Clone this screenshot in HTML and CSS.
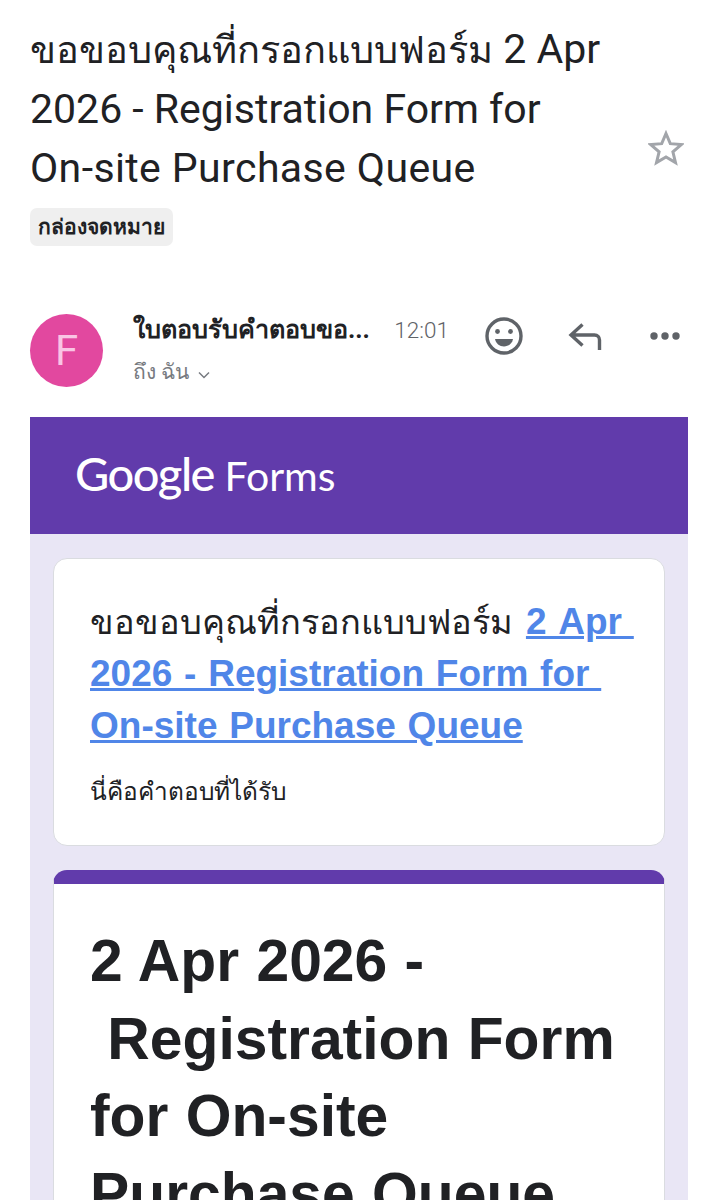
FILE: index.html
```html
<!DOCTYPE html>
<html>
<head>
  <meta charset="UTF-8">
  <title>Email</title>
  <link rel="stylesheet" href="styles.css">
</head>
<body>
  <div class="subject-row">
    <div class="subject-text">
      <h1 class="subject"><span class="subject-th">ขอขอบคุณที่กรอกแบบฟอร์ม</span> 2 Apr<br>2026 - Registration Form for<br><span class="subject-end">On-site Purchase Queue</span></h1>
      <span class="label">กล่องจดหมาย</span>
    </div>
    <svg class="star" viewBox="0 0 36 36" width="36" height="36">
      <path d="M18 3.5l4.3 10.2 11 .9-8.4 7.200 2.600 10.800L18 26.900 8.500 32.600l2.600-10.800-8.400-7.200 11-.9z" fill="none" stroke="#a2a5aa" stroke-width="3"/>
    </svg>
  </div>

  <div class="sender-row">
    <div class="avatar">F</div>
    <div class="sender-info">
      <div class="sender-top">
        <span class="sender-name">ใบตอบรับคำตอบขอ...</span>
        <span class="time">12:01</span>
      </div>
      <div class="to">ถึง ฉัน
        <svg class="chevron" viewBox="0 0 12 8" width="12" height="8">
          <path d="M1 1.500l5 5 5-5" fill="none" stroke="#777a80" stroke-width="1.500"/>
        </svg>
      </div>
    </div>
    <div class="actions">
      <svg viewBox="0 0 40 40" width="40" height="40">
        <circle cx="20" cy="20" r="17" fill="none" stroke="#5f6368" stroke-width="3.400"/>
        <circle cx="13.500" cy="15.500" r="2.400" fill="#5f6368"/>
        <circle cx="26.500" cy="15.500" r="2.400" fill="#5f6368"/>
        <path d="M11 23h18c-.8 4.500-4.500 7.500-9 7.500s-8.200-3-9-7.500z" fill="#5f6368"/>
      </svg>
      <svg viewBox="0 0 40 40" width="40" height="40">
        <path d="M15.500 8.500L4 19l11.500 10.500M4 19h23.500c3 0 5 2 5 5v10" fill="none" stroke="#5f6368" stroke-width="3.400"/>
      </svg>
      <svg viewBox="0 0 32 12" width="32" height="12">
        <circle cx="5" cy="6" r="3.700" fill="#5f6368"/>
        <circle cx="16" cy="6" r="3.700" fill="#5f6368"/>
        <circle cx="27" cy="6" r="3.700" fill="#5f6368"/>
      </svg>
    </div>
  </div>

  <div class="mail">
    <div class="mail-header">
      <span class="logo"><span class="logo-google">Google</span> Forms</span>
    </div>
    <div class="mail-body">
      <div class="card intro">
        <p class="thanks"><span class="thanks-th">ขอขอบคุณที่กรอกแบบฟอร์ม</span> <a href="#">2 Apr&nbsp;<br>2026 - Registration Form for&nbsp;<br>On-site Purchase Queue</a></p>
        <p class="note">นี่คือคำตอบที่ได้รับ</p>
      </div>
      <div class="card form-card">
        <h2 class="form-title">2 Apr 2026 -<br>&nbsp;Registration Form<br>for On-site<br>Purchase Queue</h2>
      </div>
    </div>
  </div>
</body>
</html>
```

FILE: styles.css
```css
html, body {
  height: 1200px;
  overflow: hidden;
}

body {
  margin: 0;
  background: #fff;
  color: #202124;
  font-family: Roboto, "Noto Sans", sans-serif;
}

.subject-row {
  display: flex;
  align-items: flex-start;
  padding: 20px 33px 0 30px;
}

.subject-text {
  flex: 1;
}

.subject {
  margin: 0;
  font-size: 41px;
  font-weight: 400;
  line-height: 59px;
}

.subject-th {
  font-size: 38px;
}

.subject-end {
  letter-spacing: .4px;
}

.label {
  display: inline-block;
  margin-top: 10px;
  padding: 0 8px;
  height: 38px;
  line-height: 38px;
  background: #efefef;
  border-radius: 7px;
  font-size: 21px;
  font-weight: 600;
}

.star {
  margin-top: 110px;
}

.sender-row {
  display: flex;
  align-items: flex-start;
  height: 73px;
  margin-top: 68px;
  padding: 0 30px;
}

.avatar {
  width: 73px;
  height: 73px;
  border-radius: 50%;
  background: #e2489f;
  color: #f9c5e4;
  font-size: 42px;
  line-height: 73px;
  text-align: center;
}

.sender-info {
  margin: -5px 0 0 30px;
  width: 316px;
}

.sender-top {
  display: flex;
  justify-content: space-between;
  align-items: baseline;
}

.sender-name {
  font-size: 25.2px;
  font-weight: 700;
}

.time {
  font-size: 22.5px;
  font-weight: 300;
  color: #5f6368;
}

.to {
  margin-top: 6px;
  font-size: 21px;
  color: #777a80;
}

.chevron {
  margin-left: 4px;
}

.actions {
  display: flex;
  align-items: center;
  justify-content: space-between;
  flex: 1;
  margin-left: 35px;
  margin-right: 6px;
  height: 44px;
}

.mail {
  margin: 30px 29px 0 30px;
}

.mail-header {
  height: 111px;
  padding: 0 0 6px 45px;
  background: #613bab;
  display: flex;
  align-items: center;
}

.logo {
  color: #fff;
  font-family: Lato, sans-serif;
  font-size: 41px;
  font-weight: 400;
}

.logo-google {
  font-size: 47px;
  font-weight: 500;
  letter-spacing: -1.5px;
}

.mail-body {
  background: #e9e6f5;
  padding: 24px 23px 0;
}

.card {
  background: #fff;
  border: 1px solid #dadce0;
  border-radius: 14px;
}

.intro {
  height: 288px;
  box-sizing: border-box;
  padding: 37px 20px 0 36px;
}

.thanks {
  margin: 0;
  font-size: 36px;
  line-height: 52px;
}

.thanks-th {
  margin-right: 4px;
  font-size: 34.4px;
}

.thanks a {
  color: #5086e8;
  font-family: "Liberation Sans", sans-serif;
  font-weight: 700;
  font-size: 37px;
  word-spacing: 1.5px;
}

.note {
  margin: 20px 0 0;
  font-size: 24.4px;
}

.form-card {
  margin-top: 24px;
  padding: 38px 30px 0 36px;
  border-top: 14px solid #613bab;
}

.form-title {
  margin: 0;
  font-size: 58.8px;
  font-weight: 700;
  line-height: 77.5px;
  word-spacing: 1px;
  font-family: "Liberation Sans", sans-serif;
}
```
